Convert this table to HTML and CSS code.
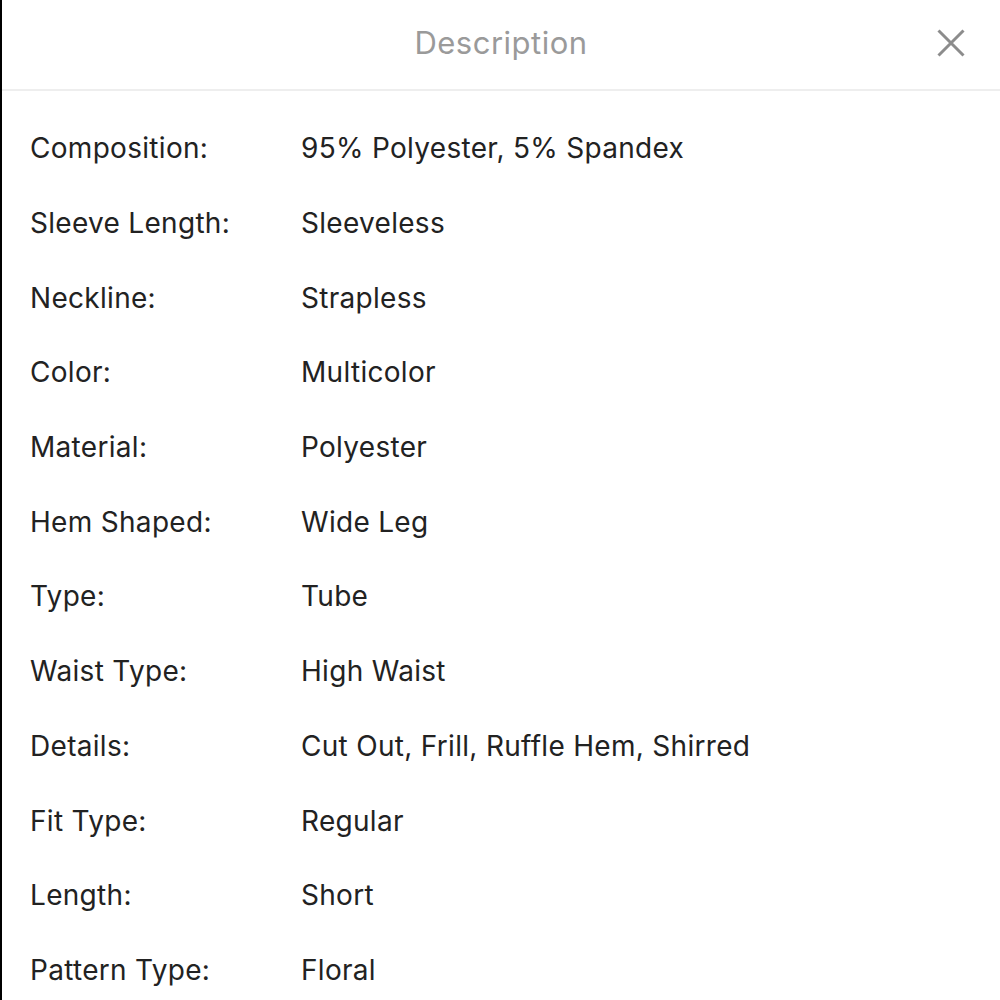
FILE: index.html
```html
<!DOCTYPE html>
<html lang="en">
<head>
<meta charset="UTF-8">
<meta name="viewport" content="width=device-width, initial-scale=1.0">
<title>Description</title>
<link rel="stylesheet" href="styles.css">
</head>
<body>
  <div class="sheet">
    <div class="sheet-header">
      <div class="sheet-title">Description</div>
      <button class="close-button" aria-label="Close">
        <svg width="28" height="28" viewBox="0 0 28 28">
          <path d="M1.5 1.5 L26.5 26.5 M26.5 1.5 L1.5 26.5" stroke="#8c8c8c" stroke-width="3" fill="none"/>
        </svg>
      </button>
    </div>

    <div class="specs">
      <div class="spec-row"><div class="spec-label">Composition:</div><div class="spec-value">95% Polyester, 5% Spandex</div></div>
      <div class="spec-row"><div class="spec-label">Sleeve Length:</div><div class="spec-value">Sleeveless</div></div>
      <div class="spec-row"><div class="spec-label">Neckline:</div><div class="spec-value">Strapless</div></div>
      <div class="spec-row"><div class="spec-label">Color:</div><div class="spec-value">Multicolor</div></div>
      <div class="spec-row"><div class="spec-label">Material:</div><div class="spec-value">Polyester</div></div>
      <div class="spec-row"><div class="spec-label">Hem Shaped:</div><div class="spec-value">Wide Leg</div></div>
      <div class="spec-row"><div class="spec-label">Type:</div><div class="spec-value">Tube</div></div>
      <div class="spec-row"><div class="spec-label">Waist Type:</div><div class="spec-value">High Waist</div></div>
      <div class="spec-row"><div class="spec-label">Details:</div><div class="spec-value">Cut Out, Frill, Ruffle Hem, Shirred</div></div>
      <div class="spec-row"><div class="spec-label">Fit Type:</div><div class="spec-value">Regular</div></div>
      <div class="spec-row"><div class="spec-label">Length:</div><div class="spec-value">Short</div></div>
      <div class="spec-row"><div class="spec-label">Pattern Type:</div><div class="spec-value">Floral</div></div>
    </div>
  </div>
</body>
</html>
```

FILE: styles.css
```css
html, body {
  margin: 0;
  padding: 0;
  background: #ffffff;
}

body {
  font-family: "Inter", "Noto Sans", sans-serif;
  height: 1000px;
  overflow: hidden;
}

.sheet {
  border-left: 2px solid #000000;
  height: 1000px;
  box-sizing: border-box;
}

.sheet-header {
  height: 89px;
  border-bottom: 2px solid #eeeeee;
  display: flex;
  align-items: center;
  justify-content: center;
  position: relative;
}

.sheet-title {
  font-size: 31px;
  color: #9a9a9a;
  letter-spacing: 0.5px;
  margin-bottom: 4px;
}

.close-button {
  position: absolute;
  right: 35px;
  top: 29px;
  background: none;
  border: none;
  padding: 0;
  width: 28px;
  height: 28px;
  cursor: pointer;
}

.close-button svg {
  display: block;
}

.specs {
  padding: 20px 0 0 28px;
}

.spec-row {
  display: flex;
  height: 74.7px;
  align-items: center;
  font-size: 28px;
  letter-spacing: 0.3px;
  color: #222222;
}

.spec-label {
  width: 271px;
  flex-shrink: 0;
}
```
